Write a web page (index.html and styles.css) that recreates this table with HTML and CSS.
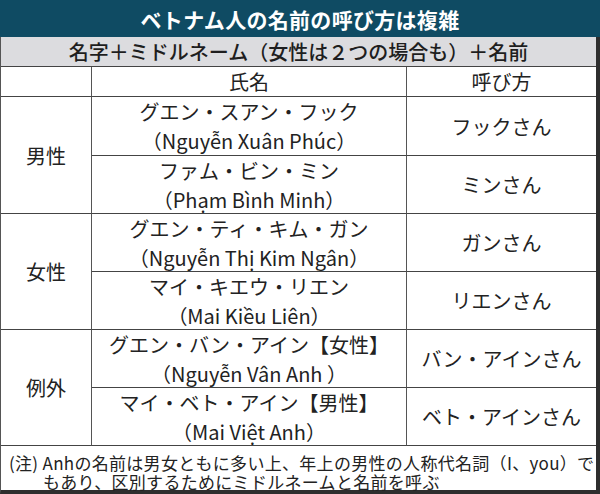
FILE: index.html
```html
<!DOCTYPE html>
<html lang="ja">
<head>
<meta charset="utf-8">
<title>ベトナム人の名前の呼び方は複雑</title>
<link rel="stylesheet" href="styles.css">
</head>
<body>
<div class="chart">
  <div class="title">ベトナム人の名前の呼び方は複雑</div>
  <div class="box">
    <div class="sub">名字＋ミドルネーム（女性は２つの場合も）＋名前</div>
    <div class="grid">
      <div class="cell head blank"></div>
      <div class="cell head name">氏名</div>
      <div class="cell head call">呼び方</div>

      <div class="cell group g1">男性</div>
      <div class="cell name">グエン・スアン・フック<br>（Nguyễn Xuân Phúc）</div>
      <div class="cell call">フックさん</div>
      <div class="cell name">ファム・ビン・ミン<br>（Phạm Bình Minh）</div>
      <div class="cell call">ミンさん</div>

      <div class="cell group">女性</div>
      <div class="cell name">グエン・ティ・キム・ガン<br>（Nguyễn Thị Kim Ngân）</div>
      <div class="cell call">ガンさん</div>
      <div class="cell name">マイ・キエウ・リエン<br>（Mai Kiều Liên）</div>
      <div class="cell call">リエンさん</div>

      <div class="cell group">例外</div>
      <div class="cell name">グエン・バン・アイン【女性】<br>（Nguyễn Vân Anh ）</div>
      <div class="cell call">バン・アインさん</div>
      <div class="cell name">マイ・ベト・アイン【男性】<br>（Mai Việt Anh）</div>
      <div class="cell call">ベト・アインさん</div>
    </div>
    <div class="note">(注) Anhの名前は男女ともに多い上、年上の男性の人称代名詞（I、you）で<br>もあり、区別するためにミドルネームと名前を呼ぶ</div>
  </div>
</div>
</body>
</html>
```

FILE: styles.css
```css
* { box-sizing: border-box; }
html, body { margin: 0; padding: 0; background: #ffffff; }
body {
  width: 600px;
  height: 494px;
  overflow: hidden;
  font-family: "Noto Sans CJK JP", "Noto Sans", sans-serif;
  color: #222222;
}
.chart { width: 600px; }
.title {
  height: 37px;
  background: #0f4b63;
  color: #ffffff;
  font-size: 21px;
  font-weight: 700;
  display: flex;
  align-items: center;
  justify-content: center;
  letter-spacing: 0.3px;
}
.box {
  border-left: 1px solid #555555;
  border-right: 4px solid #2e2e2e;
  border-bottom: 4px solid #2e2e2e;
}
.sub {
  height: 30px;
  background: #dcdcdf;
  border-bottom: 1px solid #444444;
  font-size: 20px;
  font-weight: 500;
  display: flex;
  align-items: center;
  justify-content: center;
  color: #1e1e1e;
}
.grid {
  display: grid;
  grid-template-columns: 91px 315px 1fr;
  grid-template-rows: 30px 59px repeat(5, 58px);
}
.cell {
  display: flex;
  align-items: center;
  justify-content: center;
  text-align: center;
  font-size: 20px;
  line-height: 29px;
  border-bottom: 1px solid #444444;
}
.group, .blank { border-right: 1px solid #555555; }
.name { border-right: 1px solid #555555; }
.group { grid-row: span 2; }
.head { line-height: 28px; }
.note {
  height: 44px;
  padding: 7px 0 0 42px;
  text-indent: -34px;
  font-size: 17px;
  line-height: 19px;
  letter-spacing: 0.3px;
  white-space: nowrap;
  color: #222222;
}
```
